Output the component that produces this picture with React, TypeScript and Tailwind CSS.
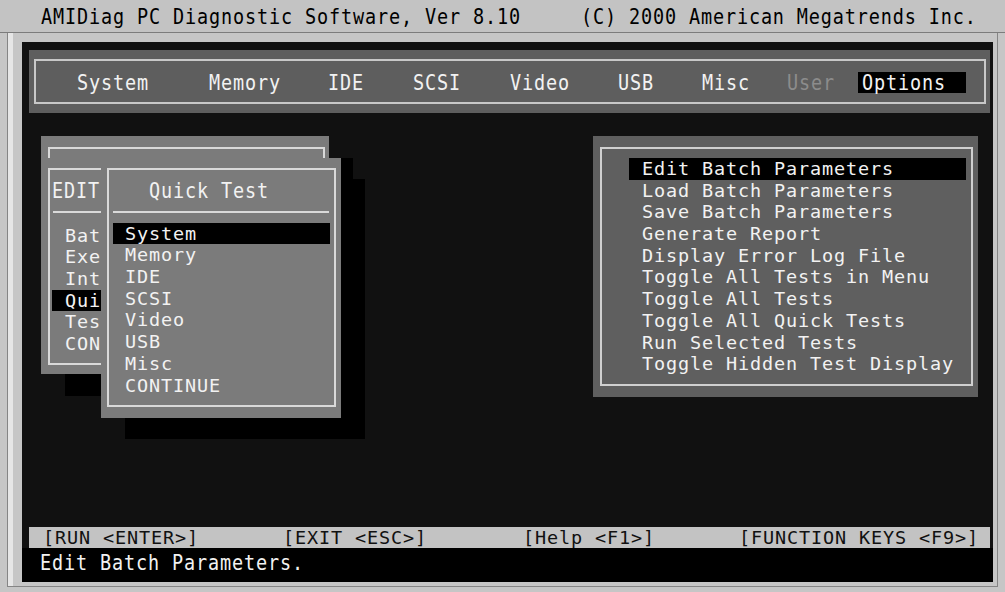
import React from "react";

// 18.5px DejaVu Sans Mono + tracking gives the 12px character cell of the console
const mono = "font-['DejaVu_Sans_Mono','Liberation_Mono',monospace] text-[18.5px] tracking-[0.86px]";

// top menu entries; widths give the column each label starts at
const menuItems = [
  { label: "System", w: "w-[132px]", dim: false },
  { label: "Memory", w: "w-[119px]", dim: false },
  { label: "IDE", w: "w-[85px]", dim: false },
  { label: "SCSI", w: "w-[97px]", dim: false },
  { label: "Video", w: "w-[108px]", dim: false },
  { label: "USB", w: "w-[84px]", dim: false },
  { label: "Misc", w: "w-[85px]", dim: false },
  { label: "User", w: "w-[71px]", dim: true },
];

const editItems = ["Bat", "Exe", "Int", "Qui", "Tes", "CON"];
const quickItems = ["System", "Memory", "IDE", "SCSI", "Video", "USB", "Misc", "CONTINUE"];
const optionItems = [
  "Edit Batch Parameters",
  "Load Batch Parameters",
  "Save Batch Parameters",
  "Generate Report",
  "Display Error Log File",
  "Toggle All Tests in Menu",
  "Toggle All Tests",
  "Toggle All Quick Tests",
  "Run Selected Tests",
  "Toggle Hidden Test Display",
];

// a single stretched label (VGA glyphs are taller than they are wide)
function Tall({ children }: { children: React.ReactNode }) {
  return <span className="inline-block scale-y-[1.15]">{children}</span>;
}

// a block of console rows, one text line every 21.7px
function Rows({
  items,
  rowClass,
  activeIndex = -1,
  activeClass = "",
  className = "",
}: {
  items: string[];
  rowClass: string;
  activeIndex?: number;
  activeClass?: string;
  className?: string;
}) {
  return (
    <div className={className}>
      {items.map((t, i) => (
        <div
          key={t}
          className={`h-[21.7px] leading-[21.7px] whitespace-pre ${i === activeIndex ? activeClass : rowClass}`}
        >
          {t}
        </div>
      ))}
    </div>
  );
}

export default function App() {
  return (
    <div className={`w-[1005px] h-[592px] overflow-hidden bg-[#c6c6c6] ${mono}`}>
      {/* window title */}
      <div className="h-[33px] border-b border-[#7c7c7c] bg-[#c3c3c3] flex items-center pl-[41px] pt-[2px] text-black whitespace-pre">
        <Tall>AMIDiag PC Diagnostic Software, Ver 8.10     (C) 2000 American Megatrends Inc.</Tall>
      </div>

      {/* window frame */}
      <div className="h-[559px] px-[7px] pb-[5px]">
        <div className="h-full border-x border-b border-[#858585] flex">
          <div className="w-[5px] bg-[#e6e6e6]" />
          <div className="flex-1 pl-[9px] pt-[9px] pr-[4px] pb-[3px]">
            {/* console screen */}
            <div className="w-[971px] h-[540px] bg-[#111111] flex flex-col text-[#f2f2f2]">
              {/* main menu */}
              <div className="mt-[8px] ml-[7px] mr-[3px] h-[63px] bg-[#5e5e5e] pl-[5px] pr-[4px] pt-[9px]">
                <div className="h-[45px] border-2 border-[#c8c8c8] flex items-center pl-[41px] pt-[2px]">
                  {menuItems.map((m) => (
                    <div key={m.label} className={`${m.w} ${m.dim ? "text-[#8c8c8c]" : ""}`}>
                      <Tall>{m.label}</Tall>
                    </div>
                  ))}
                  <div className="w-[108px] h-[21px] bg-black pl-[4px] leading-[21px]">
                    <Tall>Options</Tall>
                  </div>
                </div>
              </div>

              {/* work area */}
              <div className="h-[414px] flex justify-between items-start">
                {/* stacked pop-up windows */}
                <div className="relative ml-[19px] mt-[23px] w-[288px] h-[238px] bg-[#7b7b7b] shadow-[24px_22px_0_#000] pl-[7px] pt-[11px]">
                  <div className="w-[277px] h-[11px] border-t-2 border-x-2 border-[#d9d9d9]" />
                  <div className="mt-[10px] w-[120px] h-[197px] border-2 border-[#d9d9d9]">
                    <div className="mt-[10px] pl-[2px] h-[21.7px] leading-[21.7px]">
                      <Tall>EDIT</Tall>
                    </div>
                    <div className="mt-[9px] ml-[3px] h-[2px] bg-[#d9d9d9]" />
                    <Rows
                      className="mt-[12px]"
                      items={editItems}
                      rowClass="pl-[15px]"
                      activeIndex={3}
                      activeClass="ml-[2px] pl-[13px] bg-black"
                    />
                  </div>

                  <div className="absolute left-[60px] top-[22px] z-10 w-[240px] h-[260px] bg-[#7b7b7b] shadow-[24px_21px_0_#000] pl-[6px] pt-[10px] pr-[5px] pb-[11px]">
                    <div className="h-full border-2 border-[#d9d9d9]">
                      <div className="mt-[10px] pl-[40px] h-[21.7px] leading-[21.7px]">
                        <Tall>Quick Test</Tall>
                      </div>
                      <div className="mt-[9px] ml-[4px] mr-[5px] h-[2px] bg-[#d9d9d9]" />
                      <Rows
                        className="mt-[10px] ml-[4px] mr-[4px]"
                        items={quickItems}
                        rowClass="pl-[12px]"
                        activeIndex={0}
                        activeClass="pl-[12px] bg-black"
                      />
                    </div>
                  </div>
                </div>

                {/* options menu */}
                <div className="mr-[15px] mt-[23px] w-[385px] h-[261px] bg-[#5f5f5f] pl-[7px] pt-[11px] pr-[5px] pb-[11px]">
                  <div className="h-full border-2 border-[#d0d0d0] pt-[9px] pl-[27px] pr-[5px]">
                    <Rows items={optionItems} rowClass="pl-[13px]" activeIndex={0} activeClass="pl-[13px] bg-black" />
                  </div>
                </div>
              </div>

              {/* key hints */}
              <div className="ml-[7px] mr-[3px] h-[21px] bg-[#c3c3c3] flex items-center pl-[14px] text-[#111111] whitespace-pre">
                <span className="w-[240px]">[RUN &lt;ENTER&gt;]</span>
                <span className="w-[240px]">[EXIT &lt;ESC&gt;]</span>
                <span className="w-[216px]">[Help &lt;F1&gt;]</span>
                <span>[FUNCTION KEYS &lt;F9&gt;]</span>
              </div>

              {/* status line */}
              <div className="h-[34px] bg-black pl-[18px] pt-[4px] leading-[21.7px]">
                <Tall>Edit Batch Parameters.</Tall>
              </div>
            </div>
          </div>
        </div>
      </div>
    </div>
  );
}
